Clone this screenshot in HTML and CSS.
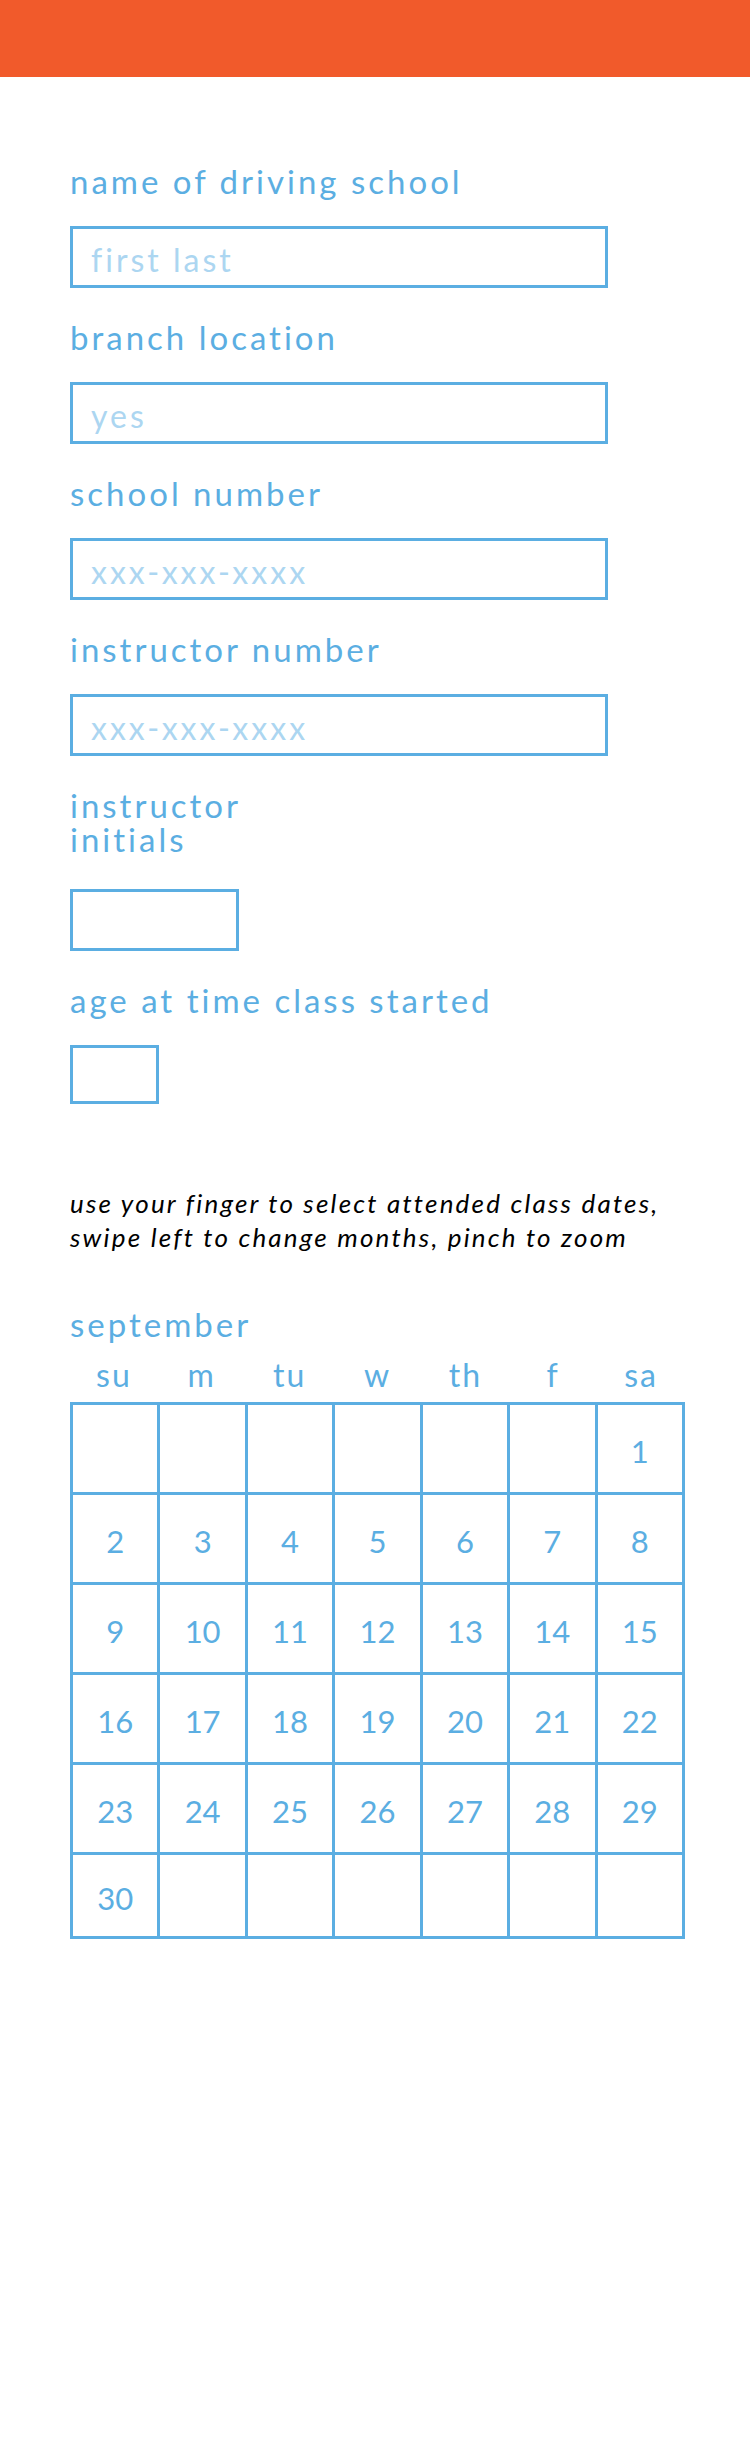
FILE: index.html
```html
<!DOCTYPE html>
<html>
<head>
    <meta charset="UTF-8">
    <title>driving school</title>
    <link rel="stylesheet" href="styles.css">
</head>
<body>
    <div class="top-bar"></div>

    <div class="container">
        <div class="field">
            <label class="field-label" for="schoolName">name of driving school</label>
            <input class="field-input" id="schoolName" type="text" placeholder="first last">
        </div>

        <div class="field">
            <label class="field-label" for="branch">branch location</label>
            <input class="field-input" id="branch" type="text" placeholder="yes">
        </div>

        <div class="field">
            <label class="field-label" for="schoolNumber">school number</label>
            <input class="field-input" id="schoolNumber" type="text" placeholder="xxx-xxx-xxxx">
        </div>

        <div class="field">
            <label class="field-label" for="instructorNumber">instructor number</label>
            <input class="field-input" id="instructorNumber" type="text" placeholder="xxx-xxx-xxxx">
        </div>

        <div class="field">
            <label class="field-label field-label-multi" for="initials">instructor<br>initials</label>
            <input class="field-input field-initials" id="initials" type="text">
        </div>

        <div class="field">
            <label class="field-label" for="age">age at time class started</label>
            <input class="field-input field-age" id="age" type="text">
        </div>

        <p class="hint">use your finger to select attended class dates,<br>swipe left to change months, pinch to zoom</p>

        <div class="calendar">
            <div class="month">september</div>
            <div class="weekdays">
                <span>su</span><span>m</span><span>tu</span><span>w</span><span>th</span><span>f</span><span>sa</span>
            </div>
            <div class="days">
                <div class="day"></div><div class="day"></div><div class="day"></div><div class="day"></div><div class="day"></div><div class="day"></div><div class="day">1</div>
                <div class="day">2</div><div class="day">3</div><div class="day">4</div><div class="day">5</div><div class="day">6</div><div class="day">7</div><div class="day">8</div>
                <div class="day">9</div><div class="day">10</div><div class="day">11</div><div class="day">12</div><div class="day">13</div><div class="day">14</div><div class="day">15</div>
                <div class="day">16</div><div class="day">17</div><div class="day">18</div><div class="day">19</div><div class="day">20</div><div class="day">21</div><div class="day">22</div>
                <div class="day">23</div><div class="day">24</div><div class="day">25</div><div class="day">26</div><div class="day">27</div><div class="day">28</div><div class="day">29</div>
                <div class="day">30</div><div class="day"></div><div class="day"></div><div class="day"></div><div class="day"></div><div class="day"></div><div class="day"></div>
            </div>
        </div>
    </div>
</body>
</html>
```

FILE: styles.css
```css
:root {
    --blue: #5baee2;
    --blue-light: #acd6f1;
    --orange: #f15a2b;
    --font: 'Lato', 'Open Sans', sans-serif;
}

* {
    margin: 0;
    padding: 0;
    box-sizing: border-box;
}

body {
    background: #fff;
    font-family: var(--font);
    color: var(--blue);
}

.top-bar {
    height: 77px;
    background: var(--orange);
}

.container {
    padding: 87px 0 0 70px;
}

/* form fields */
.field {
    display: flex;
    flex-direction: column;
    align-items: flex-start;
    margin-bottom: 32px;
}

.field-label {
    font-size: 33px;
    line-height: 34px;
    letter-spacing: 3px;
    margin-bottom: 28px;
}

.field-label-multi {
    margin-bottom: 33px;
}

.field-input {
    width: 538px;
    height: 62px;
    border: 3px solid var(--blue);
    border-radius: 0;
    padding: 4px 18px 0;
    font-family: var(--font);
    font-size: 32px;
    letter-spacing: 3px;
    color: var(--blue);
    outline: none;
    background: #fff;
}

.field-input::placeholder {
    color: var(--blue-light);
}

.field-initials {
    width: 169px;
}

.field-age {
    width: 89px;
    height: 59px;
}

.hint {
    margin-top: 82px;
    font-size: 26px;
    line-height: 34px;
    font-style: italic;
    letter-spacing: 2.2px;
    color: #000;
}

/* calendar */
.calendar {
    width: 615px;
    margin-top: 53px;
}

.month {
    font-size: 33px;
    line-height: 34px;
    letter-spacing: 3px;
    margin-bottom: 17px;
}

.weekdays {
    display: grid;
    grid-template-columns: repeat(7, 1fr);
    font-size: 32px;
    line-height: 34px;
    letter-spacing: 2px;
    text-align: center;
    margin-bottom: 10px;
}

.days {
    display: grid;
    grid-template-columns: repeat(7, 1fr);
    grid-template-rows: repeat(5, 90px) 84px;
    border-top: 3px solid var(--blue);
    border-left: 3px solid var(--blue);
}

.day {
    display: flex;
    align-items: center;
    justify-content: center;
    border-right: 3px solid var(--blue);
    border-bottom: 3px solid var(--blue);
    font-size: 31px;
    padding-top: 4px;
}
```
